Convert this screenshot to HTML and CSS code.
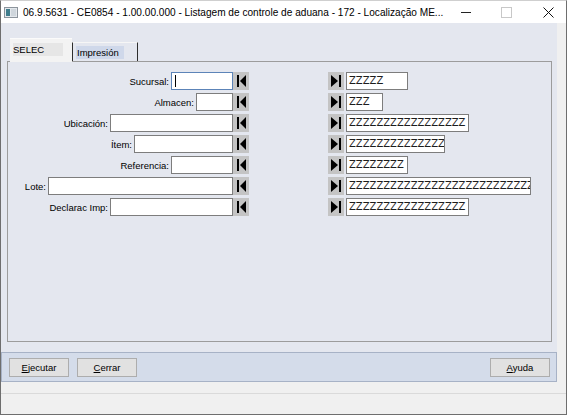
FILE: index.html
```html
<!DOCTYPE html>
<html lang="es">
<head>
<meta charset="utf-8">
<title>Listagem de controle de aduana</title>
<link rel="stylesheet" href="styles.css">
</head>
<body>
<div class="window">
  <div class="titlebar">
    <svg class="appicon" width="14" height="11" viewBox="0 0 14 11">
      <rect x="0.5" y="0.5" width="13" height="10" fill="#e4e8ec" stroke="#8c949c"/>
      <rect x="2" y="2" width="4" height="7" fill="#3f7d8c"/>
      <rect x="7" y="2" width="5" height="7" fill="#cfd6dc"/>
    </svg>
    <span class="title">06.9.5631 - CE0854 - 1.00.00.000 - Listagem de controle de aduana - 172 - Localização ME...</span>
    <div class="controls">
      <span class="ctl-min"></span>
      <span class="ctl-max"></span>
      <svg class="ctl-close" width="11" height="11" viewBox="0 0 11 11">
        <path d="M0.5 0.5 L10.5 10.5 M10.5 0.5 L0.5 10.5" stroke="#111" stroke-width="1"/>
      </svg>
    </div>
  </div>
  <div class="client">
    <div class="main">
      <div class="tabs">
        <div class="tab tab-active"><span class="tab-label">SELEC</span></div>
        <div class="tab tab-other"><span class="tab-label tab-label-sel">Impresión</span></div>
      </div>
      <div class="panel">
        <div class="form">
          <div class="l"><span class="lbl">Sucursal:</span><div class="field w62 focus"><span class="caret"></span></div><svg class="nav" viewBox="0 0 16 18"><rect x="4" y="3" width="2" height="12"/><polygon points="13,3 13,15 7,9"/></svg></div>
          <div class="r"><svg class="nav" viewBox="0 0 16 18"><polygon points="3,3 3,15 10,9"/><rect x="11" y="3" width="2" height="12"/></svg><div class="field w62"><span class="val">ZZZZZ</span></div></div>

          <div class="l"><span class="lbl">Almacen:</span><div class="field w37"></div><svg class="nav" viewBox="0 0 16 18"><rect x="4" y="3" width="2" height="12"/><polygon points="13,3 13,15 7,9"/></svg></div>
          <div class="r"><svg class="nav" viewBox="0 0 16 18"><polygon points="3,3 3,15 10,9"/><rect x="11" y="3" width="2" height="12"/></svg><div class="field w37"><span class="val">ZZZ</span></div></div>

          <div class="l"><span class="lbl">Ubicación:</span><div class="field w123"></div><svg class="nav" viewBox="0 0 16 18"><rect x="4" y="3" width="2" height="12"/><polygon points="13,3 13,15 7,9"/></svg></div>
          <div class="r"><svg class="nav" viewBox="0 0 16 18"><polygon points="3,3 3,15 10,9"/><rect x="11" y="3" width="2" height="12"/></svg><div class="field w123"><span class="val">ZZZZZZZZZZZZZZZZZ</span></div></div>

          <div class="l"><span class="lbl">Ítem:</span><div class="field w99"></div><svg class="nav" viewBox="0 0 16 18"><rect x="4" y="3" width="2" height="12"/><polygon points="13,3 13,15 7,9"/></svg></div>
          <div class="r"><svg class="nav" viewBox="0 0 16 18"><polygon points="3,3 3,15 10,9"/><rect x="11" y="3" width="2" height="12"/></svg><div class="field w99"><span class="val">ZZZZZZZZZZZZZZZ</span></div></div>

          <div class="l"><span class="lbl">Referencia:</span><div class="field w62"></div><svg class="nav" viewBox="0 0 16 18"><rect x="4" y="3" width="2" height="12"/><polygon points="13,3 13,15 7,9"/></svg></div>
          <div class="r"><svg class="nav" viewBox="0 0 16 18"><polygon points="3,3 3,15 10,9"/><rect x="11" y="3" width="2" height="12"/></svg><div class="field w62"><span class="val">ZZZZZZZZ</span></div></div>

          <div class="l"><span class="lbl">Lote:</span><div class="field w185"></div><svg class="nav" viewBox="0 0 16 18"><rect x="4" y="3" width="2" height="12"/><polygon points="13,3 13,15 7,9"/></svg></div>
          <div class="r"><svg class="nav" viewBox="0 0 16 18"><polygon points="3,3 3,15 10,9"/><rect x="11" y="3" width="2" height="12"/></svg><div class="field w185"><span class="val">ZZZZZZZZZZZZZZZZZZZZZZZZZZZZZZ</span></div></div>

          <div class="l"><span class="lbl">Declarac Imp:</span><div class="field w123"></div><svg class="nav" viewBox="0 0 16 18"><rect x="4" y="3" width="2" height="12"/><polygon points="13,3 13,15 7,9"/></svg></div>
          <div class="r"><svg class="nav" viewBox="0 0 16 18"><polygon points="3,3 3,15 10,9"/><rect x="11" y="3" width="2" height="12"/></svg><div class="field w123"><span class="val">ZZZZZZZZZZZZZZZZZ</span></div></div>
        </div>
      </div>
      <div class="buttonbar">
        <button class="btn"><u>E</u>jecutar</button>
        <button class="btn"><u>C</u>errar</button>
        <button class="btn btn-right"><u>A</u>yuda</button>
      </div>
    </div>
    <div class="strip"></div>
  </div>
  <div class="footer"><div class="footer-line"></div></div>
</div>
</body>
</html>
```

FILE: styles.css
```css
* { box-sizing: border-box; }
html, body { margin: 0; padding: 0; background: #f0f0f0; }
body { font-family: "Liberation Sans", Arial, sans-serif; color: #000; }

.window {
  width: 567px;
  height: 415px;
  border: 1px solid #6e6e6e;
  border-top-color: #cfcfcf;
  display: flex;
  flex-direction: column;
  background: #f0f0f0;
  overflow: hidden;
}

.titlebar {
  flex: none;
  height: 22px;
  background: #fff;
  display: flex;
  align-items: center;
}
.appicon { flex: none; margin-left: 3px; display: block; }
.title {
  margin-left: 5px;
  font-size: 10.1px;
  white-space: nowrap;
  color: #000;
}
.controls { margin-left: auto; display: flex; align-items: center; }
.ctl-min { display: block; width: 10px; height: 1px; background: #222; margin-right: 30px; }
.ctl-max { display: block; width: 11px; height: 11px; border: 1px solid #c8c8c8; margin-right: 31px; }
.ctl-close { display: block; margin-right: 12px; }

.client { flex: none; height: 359px; display: flex; }
.main {
  width: 556px;
  background: #e4e7ef;
  display: flex;
  flex-direction: column;
}
.strip { flex: 1; background: #f0f0f0; }

.tabs {
  height: 23px;
  margin: 15px 0 0 9px;
  display: flex;
  align-items: flex-end;
}
.tab { font-size: 9.5px; }
.tab-active {
  width: 62px;
  height: 24px;
  margin-bottom: -1px;
  z-index: 2;
  background: #f3f3f3;
  border-top: 1px solid #fbfbfb;
  padding: 4px 0 0 3px;
}
.tab-other {
  width: 66px;
  height: 19px;
  border-left: 1px solid #2e2e2e;
  border-right: 1px solid #2e2e2e;
  border-top: 1px solid #f6f6f6;
  padding: 3px 0 0 3px;
}
.tab-label {
  display: block;
  height: 13px;
  line-height: 13px;
  background: #e6e6e6;
  width: 50px;
}
.tab-label-sel {
  width: 48px;
  background: #cfd8ea;
  padding-left: 1px;
}

.panel {
  width: 545px;
  height: 281px;
  margin-left: 6px;
  border: 1px solid #9c9c9c;
  padding-top: 10px;
}

.form {
  display: grid;
  grid-template-columns: 241px 1fr;
  grid-auto-rows: 18px;
  column-gap: 79px;
  row-gap: 3px;
}
.l { display: flex; justify-content: flex-end; align-items: center; }
.r { display: flex; align-items: center; }
.lbl { font-size: 9.5px; margin-right: 2px; white-space: nowrap; }

.field {
  height: 18px;
  border: 1px solid #7d7d7d;
  background: #fff;
  overflow: hidden;
  white-space: nowrap;
  padding-left: 2px;
  display: flex;
  align-items: center;
}
.field.focus { border-color: #5c84b8; }
.w37 { width: 37px; }
.w62 { width: 62px; }
.w99 { width: 99px; }
.w123 { width: 123px; }
.w185 { width: 185px; }

.val {
  font-family: "DejaVu Sans", Verdana, sans-serif;
  font-size: 10px;
  line-height: 16px;
  color: #1c1c1c;
}
.caret { display: block; width: 1px; height: 12px; background: #000; margin-left: 1px; }

.nav {
  flex: none;
  display: block;
  width: 16px;
  height: 18px;
  background: #c4c4c4;
  fill: #000;
}
.r .nav { margin-right: 2px; }

.buttonbar {
  flex: none;
  margin-top: 10px;
  height: 30px;
  border: 1px solid #a7b2c6;
  background: #d4dcea;
  display: flex;
  align-items: center;
  padding: 0 6px 0 7px;
}
.btn {
  width: 60px;
  height: 19px;
  border: 1px solid #adadad;
  background: #e1e1e1;
  font-family: "Liberation Sans", Arial, sans-serif;
  font-size: 9.5px;
  color: #000;
  padding: 0;
  margin: 0;
}
.btn + .btn { margin-left: 8px; }
.btn-right { margin-left: auto !important; }

.footer { flex: 1; background: #f0f0f0; }
.footer-line { margin-top: 11px; border-top: 1px solid #dadada; }
```
